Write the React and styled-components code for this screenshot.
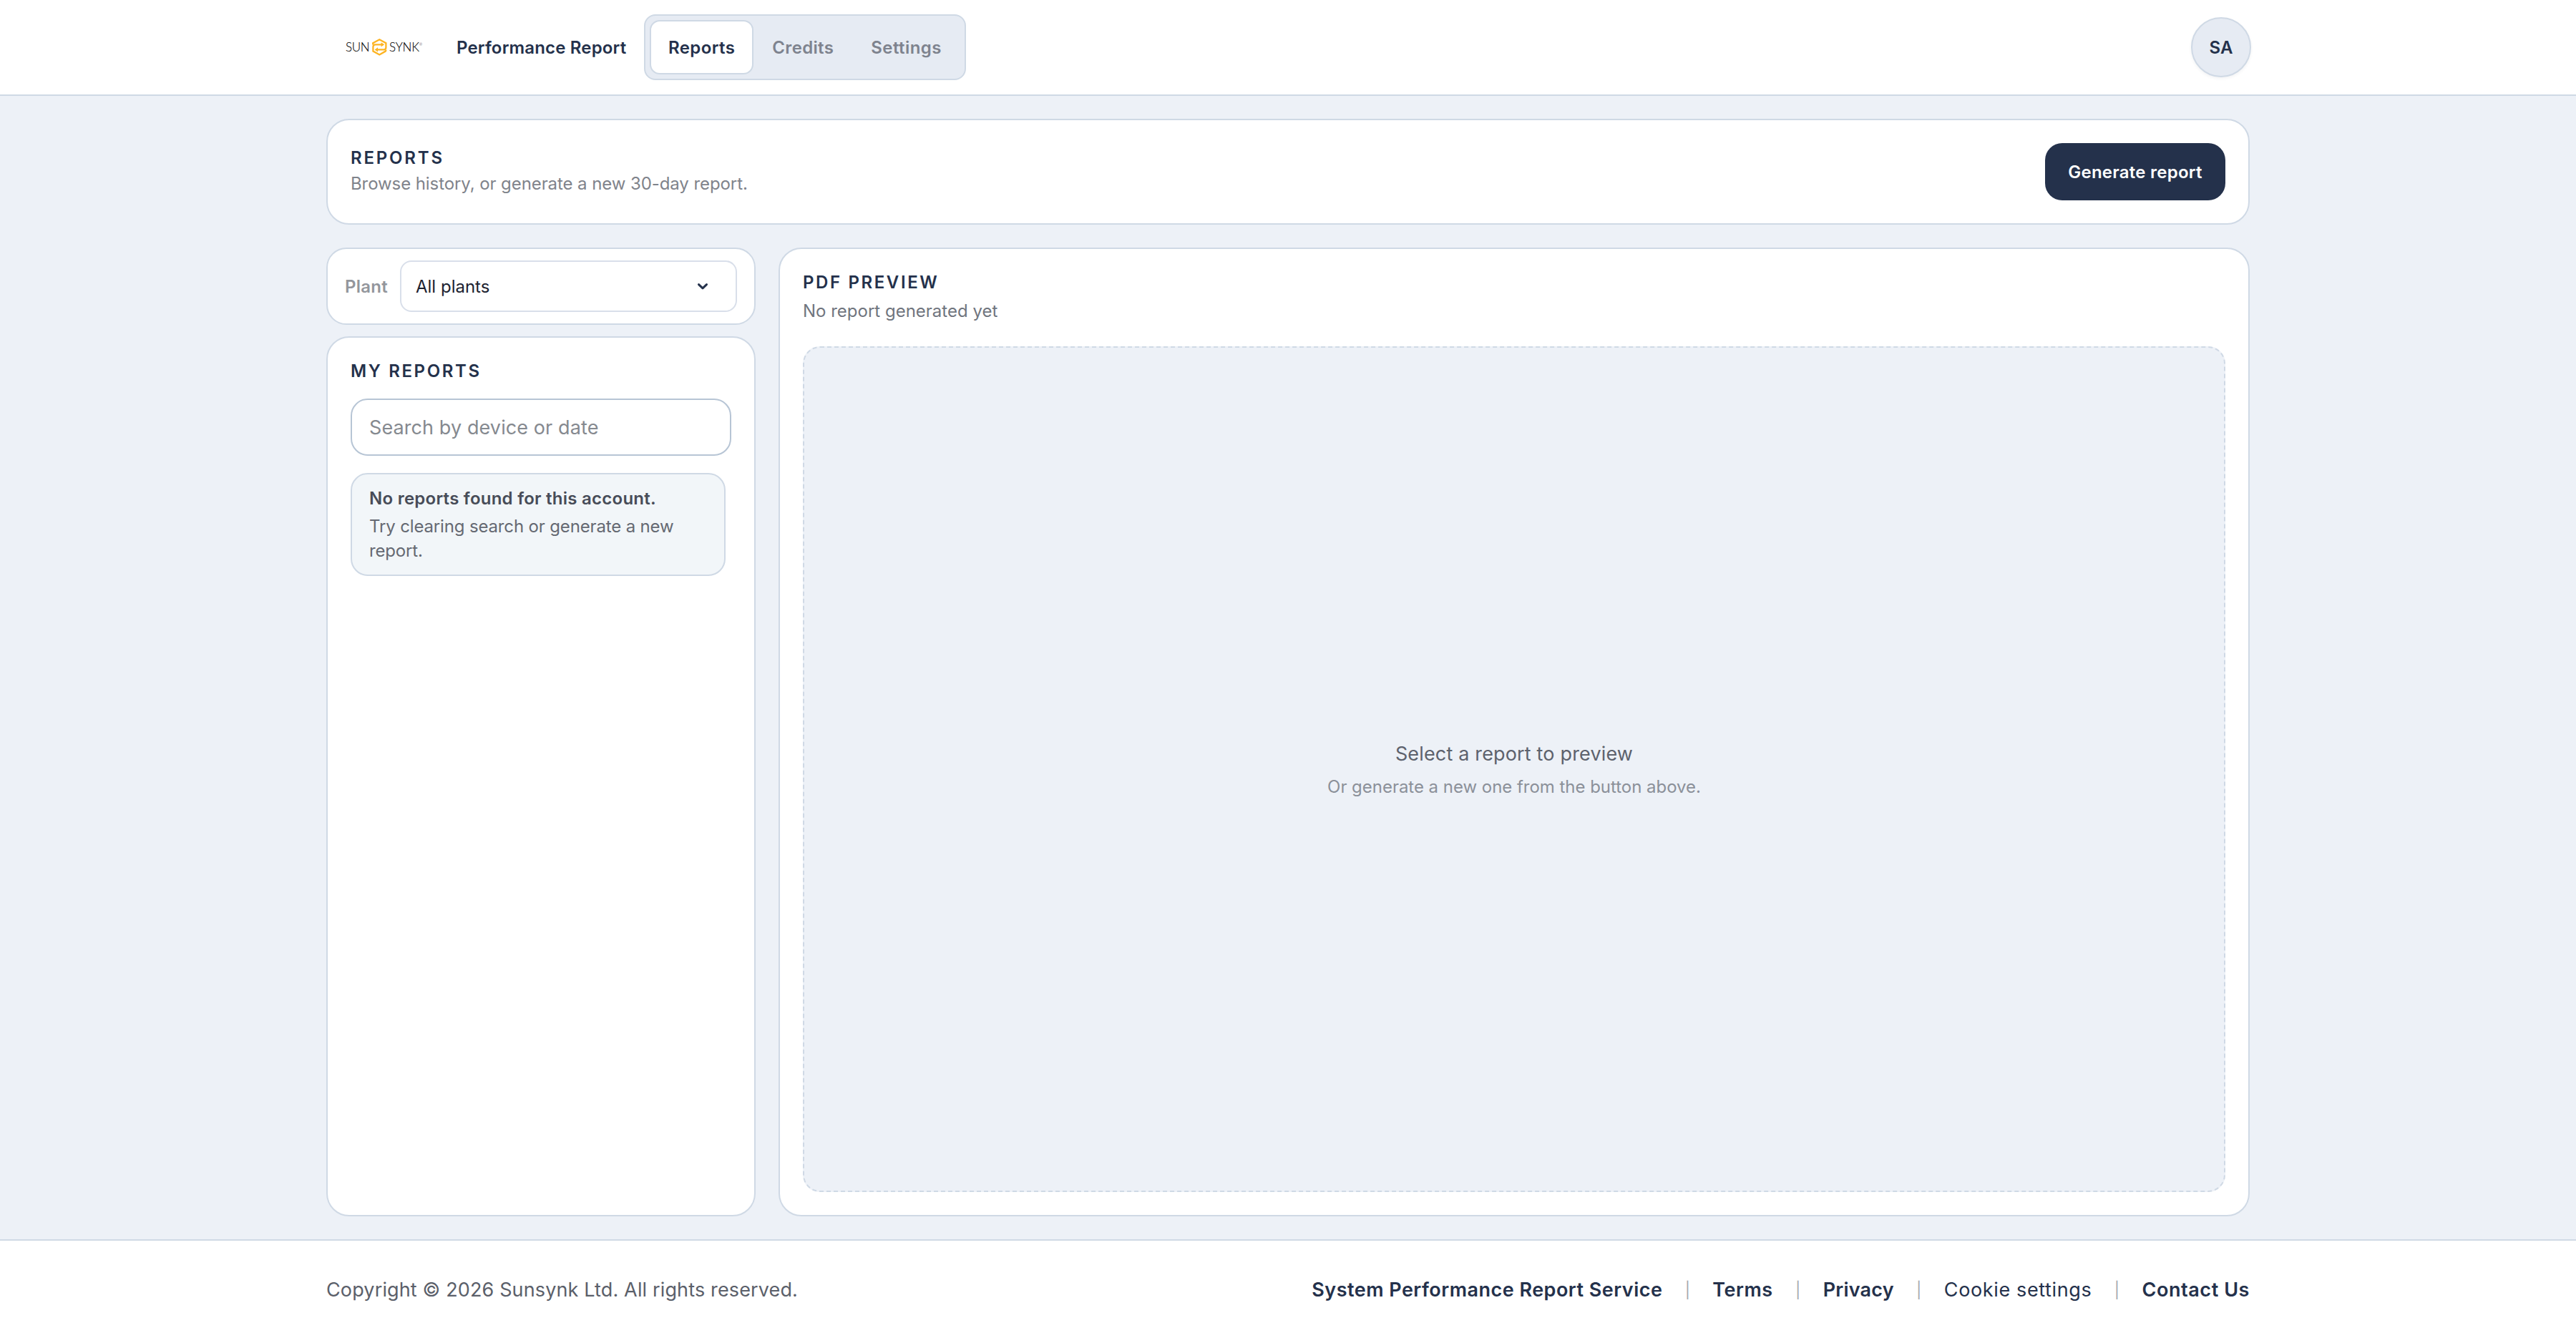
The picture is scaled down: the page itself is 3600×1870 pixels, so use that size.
import React from "react";
import styled, { createGlobalStyle } from "styled-components";

const color = {
  page: "#edf1f7",
  surface: "#ffffff",
  navy: "#24314b",
  line: "#cfd9e5",
  soft: "#e6ebf3",
};

const GlobalStyle = createGlobalStyle`
  *, *::before, *::after { box-sizing: border-box; }
  body {
    margin: 0;
    background: ${color.page};
    font-family: Inter, "Liberation Sans", sans-serif;
    -webkit-font-smoothing: antialiased;
  }
`;

const Page = styled.div`
  min-height: 1870px;
  display: flex;
  flex-direction: column;
`;

const Container = styled.div`
  width: 2688px;
  margin: 0 auto;
`;

/* One run of text: size, weight, colour, tracking and line height vary by use. */
const Text = styled.span`
  display: block;
  padding-top: ${(p) => p.$drop || 0}px;
  font-size: ${(p) => p.$size || 24}px;
  font-weight: ${(p) => p.$weight || 400};
  line-height: ${(p) => p.$line || 34}px;
  letter-spacing: ${(p) => p.$track || 0}em;
  color: ${(p) => p.$color || color.navy};
  white-space: ${(p) => (p.$wrap ? "normal" : "nowrap")};
`;

const Header = styled.header`
  height: 134px;
  background: ${color.surface};
  border-bottom: 2px solid ${color.line};
`;

const HeaderInner = styled(Container)`
  height: 132px;
  display: flex;
  align-items: center;
  padding-left: 26px;
`;

const LogoBox = styled.svg`
  display: block;
  width: 110px;
  height: 32px;
  margin-right: 46px;
`;

const ProductName = styled(Text)`
  width: 239px;
  margin-right: 23px;
`;

const Tabs = styled.nav`
  display: flex;
  width: 450px;
  height: 92px;
  padding: 6px;
  border: 2px solid ${color.line};
  border-radius: 16px;
  background: ${color.soft};
`;

const Tab = styled.button`
  height: 76px;
  padding: 0 24px;
  border: 2px solid ${(p) => (p.$active ? color.line : "transparent")};
  border-radius: 14px;
  background: ${(p) => (p.$active ? color.surface : "transparent")};
  color: ${(p) => (p.$active ? color.navy : "#7e838e")};
  font: 600 24px Inter, "Liberation Sans", sans-serif;
  letter-spacing: ${(p) => p.$track}em;
`;

const Avatar = styled.div`
  display: grid;
  place-items: center;
  width: 84px;
  height: 84px;
  margin: 0 -2px 0 auto;
  border: 2px solid ${color.line};
  border-radius: 50%;
  background: ${color.soft};
  box-shadow: 0 2px 4px rgba(36, 49, 75, 0.06);
`;

const Main = styled(Container).attrs({ as: "main" })`
  flex: 1;
  display: flex;
  flex-direction: column;
  gap: 32px;
  padding: 32px 0;
`;

const Card = styled.section`
  background: ${color.surface};
  border: 2px solid ${color.line};
  border-radius: ${(p) => p.$radius || 32}px;
  padding: ${(p) => p.$pad || "32px"};
`;

const IntroCard = styled(Card)`
  height: 148px;
  display: flex;
  align-items: center;
  justify-content: space-between;
`;

const IntroText = styled.div`
  padding-bottom: 2px;
`;

const PrimaryButton = styled.button`
  width: 252px;
  height: 80px;
  border: 0;
  border-radius: 24px;
  background: ${color.navy};
  color: #fff;
  font: 600 24px Inter, "Liberation Sans", sans-serif;
  letter-spacing: 0.01em;
`;

const Columns = styled.div`
  flex: 1;
  display: grid;
  grid-template-columns: 600px 1fr;
  gap: 32px;
`;

const Sidebar = styled.aside`
  display: flex;
  flex-direction: column;
  gap: 16px;
`;

const PlantCard = styled(Card)`
  height: 108px;
  display: flex;
  align-items: center;
  justify-content: space-between;
`;

const SelectBox = styled.div`
  display: flex;
  align-items: center;
  justify-content: space-between;
  width: 471px;
  height: 72px;
  padding: 0 38px 0 20px;
  border: 2px solid #d9dfea;
  border-radius: 16px;
`;

const Chevron = styled.svg`
  display: block;
  width: 16px;
  height: 12px;
`;

const ReportsCard = styled(Card)`
  flex: 1;
`;

const SearchInput = styled.input`
  display: block;
  width: 100%;
  height: 80px;
  margin: 23px 0 24px;
  padding: 0 24px;
  border: 2px solid #b7c5d5;
  border-radius: 24px;
  background: ${color.surface};
  font: 400 27px Inter, "Liberation Sans", sans-serif;
  letter-spacing: 0.0036em;
  &::placeholder { color: #85898f; opacity: 1; }
`;

const EmptyNotice = styled.div`
  display: flex;
  flex-direction: column;
  gap: 5px;
  height: 144px;
  margin-right: 8px;
  padding: 17px 24px 15px;
  border: 2px solid ${color.line};
  border-radius: 24px;
  background: #f2f6f9;
`;

const PreviewCard = styled(Card)`
  display: flex;
  flex-direction: column;
`;

const PreviewSubtitle = styled(Text)`
  margin: 8px 0 32px;
`;

const PreviewArea = styled.div`
  flex: 1;
  display: flex;
  flex-direction: column;
  align-items: center;
  justify-content: center;
  gap: 9px;
  border: 2px dashed ${color.line};
  border-radius: 24px;
  background: ${color.page};
`;

const Footer = styled.footer`
  height: 138px;
  background: ${color.surface};
  border-top: 2px solid ${color.line};
`;

const FooterInner = styled(Container)`
  height: 136px;
  display: flex;
  align-items: center;
  justify-content: space-between;
  padding-top: 2px;
`;

const FooterLinks = styled.div`
  display: flex;
  align-items: center;
  gap: 29px;
`;

const Divider = styled.span`
  width: 12px;
  text-align: center;
  font-size: 22px;
  line-height: 34px;
  color: #a6a9af;
`;

const TABS = [
  { label: "Reports", track: 0.016, active: true },
  { label: "Credits", track: 0.0145 },
  { label: "Settings", track: 0.018 },
];

const LINKS = [
  { label: "System Performance Report Service", weight: 600, track: 0.0175 },
  { label: "Terms", weight: 600, track: 0.0188 },
  { label: "Privacy", weight: 600, track: 0.0073 },
  { label: "Cookie settings", weight: 400, track: 0.0235 },
  { label: "Contact Us", weight: 600, track: 0.0215 },
];

function Logo() {
  return (
    <LogoBox viewBox="0 0 110 32" role="img" aria-label="Sunsynk">
      <g fontFamily="Lato, sans-serif" fontWeight="300" fill="#000" stroke="#000" strokeWidth="0.1">
        <text x="1" y="22" fontSize="17" textLength="33.5" lengthAdjust="spacing">SUN</text>
        <text x="62" y="22" fontSize="17" textLength="42" lengthAdjust="spacing">SYNK</text>
        <text x="104" y="14" fontSize="5" stroke="none">®</text>
      </g>
      <g transform="translate(36 2)" fill="none" stroke="#fdb422" strokeWidth="2.3">
        <path d="M3.2 10.5V8.2L12.3 3.2L21.4 8.2V14.2Q21.4 17.4 18.4 17.4H9" />
        <path d="M21.6 17.6L20.8 19.6L12.3 24.5L3.4 19.6V13.4Q3.4 10.3 6.6 10.3H15.5" />
        <path d="M14.6 7.2L19.2 10.3L14.6 13.4ZM10 14.3L5.6 17.4L10 20.5Z" fill="#fdb422" stroke="none" />
      </g>
    </LogoBox>
  );
}

export default function App() {
  return (
    <>
      <GlobalStyle />
      <Page>
        <Header>
          <HeaderInner>
            <Logo />
            <ProductName $weight={600} $track={0.0067} $drop={2}>Performance Report</ProductName>
            <Tabs>
              {TABS.map((t) => (
                <Tab key={t.label} $active={t.active} $track={t.track}>{t.label}</Tab>
              ))}
            </Tabs>
            <Avatar>
              <Text $weight={600} $track={0.0057} $drop={2}>SA</Text>
            </Avatar>
          </HeaderInner>
        </Header>

        <Main>
          <IntroCard>
            <IntroText>
              <Text $weight={600} $track={0.117} $line={36}>REPORTS</Text>
              <Text $track={-0.0035} $line={36} $color="#7f838b">
                Browse history, or generate a new 30-day report.
              </Text>
            </IntroText>
            <PrimaryButton>Generate report</PrimaryButton>
          </IntroCard>

          <Columns>
            <Sidebar>
              <PlantCard $radius={28} $pad="0 24px">
                <Text $weight={600} $track={0.0101} $drop={2} $color="#93969c">Plant</Text>
                <SelectBox>
                  <Text $drop={2} $color="#1c2230">All plants</Text>
                  <Chevron viewBox="0 0 16 12" fill="none">
                    <path
                      d="M2.5 3.6L8 8.8L13.5 3.6"
                      stroke={color.navy}
                      strokeWidth="3"
                      strokeLinecap="round"
                      strokeLinejoin="round"
                    />
                  </Chevron>
                </SelectBox>
              </PlantCard>

              <ReportsCard>
                <Text $weight={600} $track={0.1092} $line={30}>MY REPORTS</Text>
                <SearchInput placeholder="Search by device or date" />
                <EmptyNotice>
                  <Text $weight={600} $track={0.0104} $color="#474c58">
                    No reports found for this account.
                  </Text>
                  <Text $wrap $track={-0.0063} $color="#656972">
                    Try clearing search or generate a new report.
                  </Text>
                </EmptyNotice>
              </ReportsCard>
            </Sidebar>

            <PreviewCard>
              <Text $weight={600} $track={0.1084} $line={30}>PDF PREVIEW</Text>
              <PreviewSubtitle $color="#70757e">No report generated yet</PreviewSubtitle>
              <PreviewArea>
                <Text $size={27} $line={40} $track={0.006} $color="#5d626d">
                  Select a report to preview
                </Text>
                <Text $track={-0.0012} $color="#8b9099">
                  Or generate a new one from the button above.
                </Text>
              </PreviewArea>
            </PreviewCard>
          </Columns>
        </Main>

        <Footer>
          <FooterInner>
            <Text $size={27} $track={0.0052} $color="#5b606a">
              Copyright © 2026 Sunsynk Ltd. All rights reserved.
            </Text>
            <FooterLinks>
              {LINKS.map((l, i) => (
                <React.Fragment key={l.label}>
                  {i > 0 && <Divider>|</Divider>}
                  <Text $size={27} $weight={l.weight} $track={l.track}>{l.label}</Text>
                </React.Fragment>
              ))}
            </FooterLinks>
          </FooterInner>
        </Footer>
      </Page>
    </>
  );
}
